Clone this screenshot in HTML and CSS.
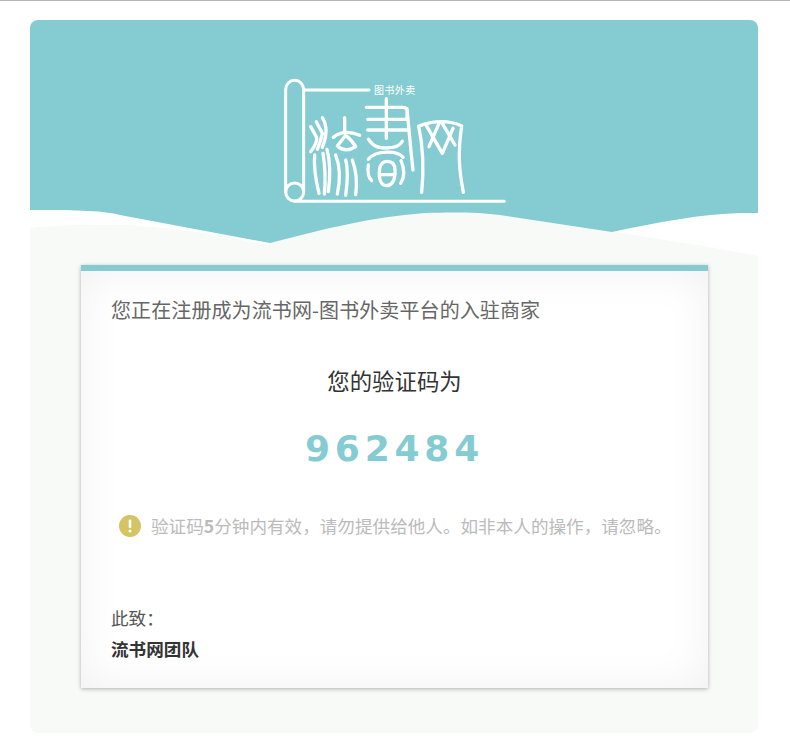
FILE: index.html
```html
<!DOCTYPE html>
<html lang="zh-CN">
<head>
<meta charset="utf-8">
<title>流书网</title>
<link rel="stylesheet" href="styles.css">
</head>
<body>
<div class="mail">
  <header class="head">
    <svg class="wave" viewBox="0 0 728 245" aria-hidden="true">
      <path class="wave-white" d="M0 189H70L240 223 232 224C180 212 110 203 60 205 35 205 15 206 0 208ZM582 211 690 192H728V236C680 226 630 220 582 211Z"/>
      <path class="wave-teal" d="M0 0H728V193H712C670 194 630 202 582 212L470 195C450 192 420 192 395 193 340 197 290 210 240 223L90 195C70 190 40 190 0 190Z"/>
    </svg>
    <div class="logo">
      <svg class="logo-art" viewBox="0 0 750 420" aria-hidden="true">
        <g class="logo-frame">
          <path d="M50 365V58A27 27 0 0 1 104 58V365"/>
          <circle cx="77" cy="366" r="27"/>
          <path d="M77 394H706M104 60H300"/>
        </g>
        <g class="logo-seal">
          <path d="M125 170 143 202Q146 218 125 245M142 155 160 190Q155 215 145 238M160 143Q182 178 160 232M137 255Q133 300 150 370M162 250Q172 310 166 372M174 238Q188 290 178 365"/>
          <path d="M227 143V182M193 202Q225 176 272 196M230 196 205 228Q230 250 260 230 250 212 230 196ZM200 255Q220 305 205 372M230 270Q240 305 230 376M250 270Q268 320 260 374"/>
          <path d="M352 86V205M292 112H402Q416 112 414 130V148H296M296 180H418M298 208C315 232 330 234 352 234 375 234 392 230 400 214M298 268C320 240 385 240 402 262M298 285C295 305 298 322 308 332M396 272C408 300 405 325 395 340M332 296C335 280 345 274 355 274 372 274 378 285 378 300 380 335 365 347 352 347 335 347 328 325 332 296ZM332 314H378M414 116C420 180 426 250 432 300"/>
          <path d="M458 367C466 290 462 230 449 168 500 150 540 150 578 168 566 250 570 300 583 367M470 163 520 250 552 175M510 160 480 230M520 160 558 225"/>
        </g>
      </svg>
      <span class="logo-tag">图书外卖</span>
    </div>
  </header>
  <main class="card">
    <p class="intro">您正在注册成为流书网-图书外卖平台的入驻商家</p>
    <p class="code-label">您的验证码为</p>
    <p class="code">962484</p>
    <div class="notice">
      <svg class="notice-icon" viewBox="0 0 22 22" aria-hidden="true">
        <circle class="notice-disc" cx="11" cy="11" r="11"/>
        <rect class="notice-mark" x="9.7" y="4.5" width="2.6" height="8.5" rx="1.2"/>
        <circle class="notice-mark" cx="11" cy="16" r="1.5"/>
      </svg>
      <span>验证码<b class="notice-num">5</b>分钟内有效，请勿提供给他人。如非本人的操作，请忽略。</span>
    </div>
    <p class="regards">此致：</p>
    <p class="team">流书网团队</p>
  </main>
</div>
</body>
</html>
```
FILE: styles.css
```css
* { box-sizing: border-box; }
html, body { margin: 0; padding: 0; }
body {
  min-height: 753px;
  background: #fff;
  border-top: 1px solid #b4b4b4;
  font-family: "Noto Sans CJK SC", "Liberation Sans", sans-serif;
}
.mail {
  width: 728px;
  height: 713px;
  margin: 19px 0 0 30px;
  background: #f8faf8;
  border-radius: 8px;
  overflow: hidden;
}
.head {
  position: relative;
  height: 245px;
  padding-top: 50px;
}
.wave {
  position: absolute;
  left: 0;
  top: 0;
  width: 728px;
  height: 245px;
  display: block;
}
.wave-white { fill: #fff; }
.wave-teal { fill: #84ccd2; }
.logo {
  position: relative;
  width: 250px;
  height: 140px;
  margin: 0 auto;
}
.logo-art { display: block; width: 250px; height: 140px; }
.logo-frame,
.logo-seal {
  fill: none;
  stroke: #fff;
  stroke-linecap: round;
  stroke-linejoin: round;
}
.logo-frame { stroke-width: 9; }
.logo-seal { stroke-width: 10; }
.logo-tag {
  position: absolute;
  left: 105px;
  top: 13px;
  font-size: 10px;
  line-height: 14px;
  letter-spacing: .4px;
  color: #fff;
}
.card {
  width: 627px;
  height: 423px;
  margin-left: 51px;
  padding: 0 30px;
  background: #fff;
  border-top: 6px solid #84ccd2;
  box-shadow: 0 1px 4px rgba(0, 0, 0, .3), inset 0 0 44px rgba(0, 0, 0, .06);
}
.card p { margin: 0; }
.intro {
  padding-top: 24px;
  font-size: 20px;
  line-height: 30px;
  letter-spacing: .1px;
  color: #666;
}
.code-label {
  padding-top: 38px;
  font-size: 22.4px;
  line-height: 34px;
  text-align: center;
  color: #333;
}
.code {
  padding-top: 30px;
  font-family: "DejaVu Sans", sans-serif;
  font-size: 36px;
  font-weight: 700;
  line-height: 44px;
  letter-spacing: 4.8px;
  text-align: center;
  color: #84ccd2;
}
.notice {
  display: flex;
  align-items: center;
  gap: 10px;
  margin: 42px 0 0 8px;
  font-size: 17.6px;
  line-height: 26px;
  white-space: nowrap;
  color: #bbb;
}
.notice-icon { width: 22px; height: 22px; flex: none; }
.notice-disc { fill: #d5c463; }
.notice-mark { fill: #fff; }
.notice-num { font-weight: 700; }
.regards {
  padding-top: 65px;
  font-size: 17.6px;
  line-height: 28px;
  color: #555;
}
.team {
  padding-top: 3px;
  font-size: 17.6px;
  font-weight: 700;
  line-height: 28px;
  color: #333;
}
```
